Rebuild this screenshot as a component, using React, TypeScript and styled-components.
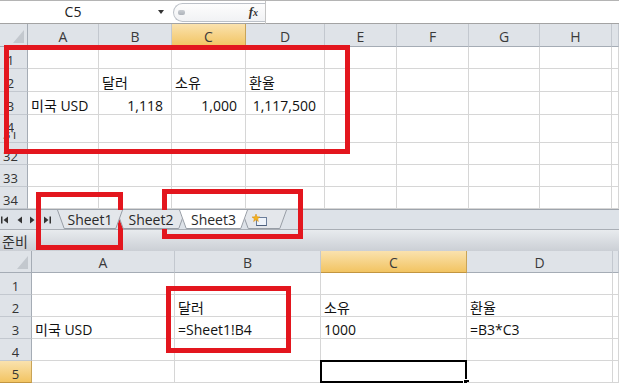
import React from "react";
import styled, { createGlobalStyle, css } from "styled-components";

const GlobalStyle = createGlobalStyle`
  html, body {
    margin: 0;
    padding: 0;
    background: #fff;
    overflow: hidden;
  }
  body {
    font-family: "Open Sans", "Noto Sans CJK KR", sans-serif;
  }
`;

const GRID = "#d6d6d6";
const HEAD_BG = "#dfe3e8";

const Screen = styled.div`
  position: relative;
  width: 619px;
  height: 384px;
  overflow: hidden;
  background: #fff;
  font-family: "Open Sans", "Noto Sans CJK KR", sans-serif;
`;

/* ---------- formula bar ---------- */
const FormulaBar = styled.div`
  display: flex;
  align-items: center;
  height: 24px;
  box-sizing: border-box;
  border-top: 1px solid #b4b4b4;
  border-bottom: 1px solid #a3a3a3;
`;
const NameBox = styled.div`
  display: flex;
  align-items: center;
  width: 170px;
  height: 100%;
`;
const NameText = styled.span`
  width: 146px;
  text-align: center;
  font-size: 14px;
  line-height: 16px;
  color: #222;
`;
const DropArrow = styled.span`
  width: 0;
  height: 0;
  margin-left: 12px;
  border-left: 3.5px solid transparent;
  border-right: 3.5px solid transparent;
  border-top: 4px solid #333;
`;
const FxPill = styled.div`
  display: flex;
  align-items: center;
  width: 92px;
  height: 19px;
  margin-left: 3px;
  box-sizing: border-box;
  border: 1px solid #bcc1c8;
  border-right: none;
  border-radius: 10px 0 0 10px;
  background: linear-gradient(#fdfdfd, #f1f2f4);
`;
const Grip = styled.span`
  width: 7px;
  height: 5px;
  margin-left: 4px;
  border-radius: 2px;
  background: linear-gradient(#c9cdd2, #aeb3ba);
`;
const Fx = styled.span`
  margin-left: auto;
  margin-right: 7px;
  font-family: "Liberation Serif", serif;
  font-style: italic;
  font-weight: bold;
  font-size: 13px;
  color: #333;
  sub {
    font-size: 10px;
    vertical-align: baseline;
  }
`;
const FormulaInput = styled.div`
  flex: 1;
  height: 23px;
  border-left: 1px solid #c4c4c4;
`;

/* ---------- sheet grid ---------- */
const Pane = styled.div<{ $cols: string; $rows: string }>`
  display: grid;
  grid-template-columns: ${(p) => p.$cols};
  grid-template-rows: ${(p) => p.$rows};
  overflow: hidden;
`;

const Corner = styled.div`
  position: relative;
  background: ${HEAD_BG};
  border-right: 1px solid #a5acb5;
  border-bottom: 1px solid #a5acb5;
  &::after {
    content: "";
    position: absolute;
    right: 3px;
    bottom: 3px;
    width: 0;
    height: 0;
    border-left: 11px solid transparent;
    border-bottom: 13px solid #c3c8ce;
  }
`;

const selectedHead = css`
  background: linear-gradient(#fae2ae, #f2c462);
  border-right-color: #c9a457;
  border-bottom-color: #c29540;
`;

const ColHead = styled.div<{ $selected?: boolean }>`
  display: flex;
  align-items: flex-end;
  justify-content: center;
  padding-bottom: 1px;
  box-sizing: border-box;
  font-size: 14px;
  line-height: 16px;
  color: #3a3a3a;
  background: ${HEAD_BG};
  border-right: 1px solid #c3c8cf;
  border-bottom: 1px solid #a5acb5;
  ${(p) => p.$selected && selectedHead}
`;

const RowHead = styled.div<{ $selected?: boolean; $pad: number }>`
  display: flex;
  align-items: flex-end;
  justify-content: center;
  padding-right: ${(p) => p.$pad}px;
  box-sizing: border-box;
  font-size: 13px;
  line-height: 16px;
  color: #333;
  background: ${HEAD_BG};
  border-right: 1px solid #a5acb5;
  border-bottom: 1px solid #c3c8cf;
  overflow: hidden;
  ${(p) => p.$selected && selectedHead}
`;

const SplitHead = styled(RowHead)`
  flex-direction: column;
  align-items: center;
  justify-content: space-between;
`;
const SplitTop = styled.span`
  margin-top: 4px;
  height: 13px;
  overflow: hidden;
`;
const SplitTail = styled.span`
  display: block;
  height: 10px;
  overflow: hidden;
  span {
    display: block;
    margin-top: -6px;
  }
`;

const Cell = styled.div<{ $right?: boolean; $selected?: boolean }>`
  position: relative;
  display: flex;
  align-items: flex-end;
  justify-content: ${(p) => (p.$right ? "flex-end" : "flex-start")};
  padding: 0 ${(p) => (p.$right ? 8 : 0)}px 0 ${(p) => (p.$right ? 0 : 3)}px;
  box-sizing: border-box;
  min-width: 0;
  font-size: 14px;
  line-height: 16px;
  color: #111;
  white-space: nowrap;
  border-right: 1px solid ${GRID};
  border-bottom: 1px solid ${GRID};
  ${(p) =>
    p.$selected &&
    css`
      &::before {
        content: "";
        position: absolute;
        left: -1px;
        top: -1px;
        right: -1px;
        bottom: -1px;
        border: 2px solid #000;
      }
      &::after {
        content: "";
        position: absolute;
        right: -4px;
        bottom: -4px;
        width: 5px;
        height: 5px;
        background: #000;
        border: 1px solid #fff;
      }
    `}
`;

/* ---------- sheet tabs ---------- */
const TabBar = styled.div`
  display: flex;
  height: 21px;
  box-sizing: border-box;
  background: #dde2e8;
  border-top: 1px solid #9ea4ac;
  border-bottom: 1px solid #a9aeb5;
`;
const Nav = styled.div`
  display: flex;
  align-items: center;
  gap: 4px;
  width: 57px;
  flex-shrink: 0;
  height: 19px;
`;
const NavBtn = styled.svg`
  width: 10px;
  height: 8px;
`;
const Tabs = styled.div`
  display: flex;
  height: 19px;
`;
const TabWrap = styled.div<{ $w: number; $z: number }>`
  position: relative;
  display: flex;
  align-items: center;
  justify-content: center;
  padding-top: 1px;
  box-sizing: border-box;
  width: ${(p) => p.$w}px;
  height: 19px;
  margin-left: -7px;
  z-index: ${(p) => p.$z};
  &:first-child {
    margin-left: 0;
  }
`;
const TabShape = styled.svg`
  position: absolute;
  left: 0;
  top: 0;
  width: 100%;
  height: 100%;
`;
const TabLabel = styled.span`
  position: relative;
  font-size: 14px;
  line-height: 16px;
  color: #2a2a2a;
`;
const TabIcon = styled.svg`
  position: relative;
  width: 16px;
  height: 13px;
  margin-left: -8px;
`;

const StatusBar = styled.div`
  display: flex;
  align-items: center;
  height: 21px;
  padding-left: 2px;
  box-sizing: border-box;
  background: linear-gradient(#e8ebee, #cbcfd5);
  font-family: "Noto Sans CJK KR", sans-serif;
  font-size: 14px;
  color: #333;
`;

/* ---------- annotation boxes ---------- */
const RedBox = styled.div`
  position: absolute;
  box-sizing: border-box;
  border: 5px solid #e3161e;
  pointer-events: none;
`;

type CellData = { text?: string; right?: boolean };
type RowData = { label: string; cells?: CellData[]; tail?: string; selected?: boolean };

const topCols = ["A", "B", "C", "D", "E", "F", "G", "H", ""];
const topRows: RowData[] = [
  { label: "1" },
  { label: "2", cells: [{}, { text: "달러" }, { text: "소유" }, { text: "환율" }] },
  {
    label: "3",
    cells: [
      { text: "미국 USD" },
      { text: "1,118", right: true },
      { text: "1,000", right: true },
      { text: "1,117,500", right: true },
    ],
  },
  { label: "4", tail: "31" },
  { label: "32" },
  { label: "33" },
  { label: "34" },
];

const bottomCols = ["A", "B", "C", "D", ""];
const bottomRows: RowData[] = [
  { label: "1" },
  { label: "2", cells: [{}, { text: "달러" }, { text: "소유" }, { text: "환율" }] },
  {
    label: "3",
    cells: [{ text: "미국 USD" }, { text: "=Sheet1!B4" }, { text: "1000" }, { text: "=B3*C3" }],
  },
  { label: "4" },
  { label: "5", selected: true },
];

interface SheetProps {
  cols: string;
  rows: string;
  headers: string[];
  data: RowData[];
  selCol: number;
  selRow?: string;
  headPad: number;
}

const Sheet = ({ cols, rows, headers, data, selCol, selRow, headPad }: SheetProps) => (
  <Pane $cols={cols} $rows={rows}>
    <Corner />
    {headers.map((h, i) => (
      <ColHead key={i} $selected={i === selCol}>
        {h}
      </ColHead>
    ))}
    {data.map((r) => (
      <React.Fragment key={r.label}>
        {r.tail ? (
          <SplitHead $pad={headPad}>
            <SplitTop>{r.label}</SplitTop>
            <SplitTail>
              <span>{r.tail}</span>
            </SplitTail>
          </SplitHead>
        ) : (
          <RowHead $pad={headPad} $selected={r.selected}>
            {r.label}
          </RowHead>
        )}
        {headers.map((_, i) => {
          const c = r.cells?.[i];
          return (
            <Cell key={i} $right={c?.right} $selected={r.label === selRow && i === selCol}>
              {c?.text}
            </Cell>
          );
        })}
      </React.Fragment>
    ))}
  </Pane>
);

const Tab = ({ w, z, active, children }: { w: number; z: number; active?: boolean; children: React.ReactNode }) => (
  <TabWrap $w={w} $z={z}>
    <TabShape viewBox={`0 0 ${w} 19`}>
      <polygon points={`0,0 ${w},0 ${w - 7},18.5 7,18.5`} fill={active ? "#ffffff" : "#e4e7eb"} />
      <polyline
        points={`0.5,0 7.2,18.5 ${w - 7.2},18.5 ${w - 0.5},0`}
        fill="none"
        stroke="#979da5"
        strokeWidth="1"
      />
    </TabShape>
    {children}
  </TabWrap>
);

const NavIcon = ({ dir, bar }: { dir: "l" | "r"; bar?: boolean }) => (
  <NavBtn viewBox="0 0 10 8">
    {dir === "l" ? (
      <>
        {bar && <rect x="1" y="0.5" width="1.5" height="7" fill="#333" />}
        <polygon points="8,0.5 8,7.5 3.5,4" fill="#333" />
      </>
    ) : (
      <>
        <polygon points="2,0.5 2,7.5 6.5,4" fill="#333" />
        {bar && <rect x="7.5" y="0.5" width="1.5" height="7" fill="#333" />}
      </>
    )}
  </NavBtn>
);

export default function App() {
  return (
    <Screen>
      <GlobalStyle />
      <FormulaBar>
        <NameBox>
          <NameText>C5</NameText>
          <DropArrow />
        </NameBox>
        <FxPill>
          <Grip />
          <Fx>
            f<sub>x</sub>
          </Fx>
        </FxPill>
        <FormulaInput />
      </FormulaBar>

      <Sheet
        cols="28px 71px 73px 74px 79px 72px 72px 71px 72px 1fr"
        rows="23px 22px 23px 23px 28px 22px 22px 22px"
        headers={topCols}
        data={topRows}
        selCol={2}
        headPad={6}
      />

      <TabBar>
        <Nav>
          <NavIcon dir="l" bar />
          <NavIcon dir="l" />
          <NavIcon dir="r" />
          <NavIcon dir="r" bar />
        </Nav>
        <Tabs>
          <Tab w={66} z={4}>
            <TabLabel>Sheet1</TabLabel>
          </Tab>
          <Tab w={70} z={3}>
            <TabLabel>Sheet2</TabLabel>
          </Tab>
          <Tab w={69} z={5} active>
            <TabLabel>Sheet3</TabLabel>
          </Tab>
          <Tab w={46} z={2}>
            <TabIcon viewBox="0 0 16 13">
              <rect x="4.5" y="3.5" width="10" height="8" fill="#eef3fa" stroke="#6b7e9b" />
              <line x1="4.5" y1="11.5" x2="14.5" y2="11.5" stroke="#4d5f7c" />
              <polygon
                points="4,0 5,2.8 8,3 5.6,4.7 6.4,7.5 4,5.8 1.6,7.5 2.4,4.7 0,3 3,2.8"
                fill="#f4b31c"
                stroke="#d88a0a"
                strokeWidth="0.5"
              />
            </TabIcon>
          </Tab>
        </Tabs>
      </TabBar>
      <StatusBar>준비</StatusBar>

      <Sheet
        cols="32px 143px 146px 146px 146px 1fr"
        rows="22px 22px 22px 22px 22px 22px"
        headers={bottomCols}
        data={bottomRows}
        selCol={2}
        selRow="5"
        headPad={0}
      />

      <RedBox style={{ left: 4, top: 45, width: 346, height: 109 }} />
      <RedBox style={{ left: 36, top: 192, width: 87, height: 58 }} />
      <RedBox style={{ left: 162, top: 189, width: 141, height: 50 }} />
      <RedBox style={{ left: 166, top: 286, width: 125, height: 67 }} />
    </Screen>
  );
}
